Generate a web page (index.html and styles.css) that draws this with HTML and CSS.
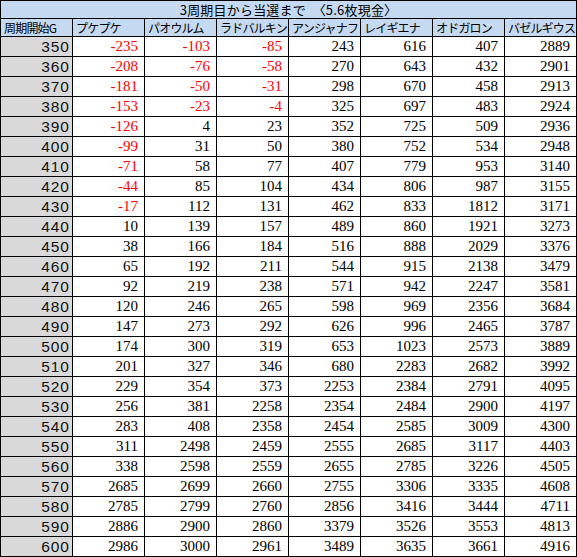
FILE: index.html
```html
<!DOCTYPE html>
<html lang="ja">
<head>
<meta charset="utf-8">
<title>3周期目から当選まで</title>
<link rel="stylesheet" href="styles.css">
</head>
<body>
<div class="sheet">
  <div class="title">3周期目から当選まで　〈5.6枚現金〉</div>
  <div class="hd">周期開始G</div><div class="hd">プケプケ</div><div class="hd">パオウルム</div><div class="hd">ラドバルキン</div><div class="hd">アンジャナフ</div><div class="hd">レイギエナ</div><div class="hd">オドガロン</div><div class="hd">バゼルギウス</div>
  <div class="g">350</div><div class="n neg">-235</div><div class="n neg">-103</div><div class="n neg">-85</div><div class="n">243</div><div class="n">616</div><div class="n">407</div><div class="n">2889</div>
  <div class="g">360</div><div class="n neg">-208</div><div class="n neg">-76</div><div class="n neg">-58</div><div class="n">270</div><div class="n">643</div><div class="n">432</div><div class="n">2901</div>
  <div class="g">370</div><div class="n neg">-181</div><div class="n neg">-50</div><div class="n neg">-31</div><div class="n">298</div><div class="n">670</div><div class="n">458</div><div class="n">2913</div>
  <div class="g">380</div><div class="n neg">-153</div><div class="n neg">-23</div><div class="n neg">-4</div><div class="n">325</div><div class="n">697</div><div class="n">483</div><div class="n">2924</div>
  <div class="g">390</div><div class="n neg">-126</div><div class="n">4</div><div class="n">23</div><div class="n">352</div><div class="n">725</div><div class="n">509</div><div class="n">2936</div>
  <div class="g">400</div><div class="n neg">-99</div><div class="n">31</div><div class="n">50</div><div class="n">380</div><div class="n">752</div><div class="n">534</div><div class="n">2948</div>
  <div class="g">410</div><div class="n neg">-71</div><div class="n">58</div><div class="n">77</div><div class="n">407</div><div class="n">779</div><div class="n">953</div><div class="n">3140</div>
  <div class="g">420</div><div class="n neg">-44</div><div class="n">85</div><div class="n">104</div><div class="n">434</div><div class="n">806</div><div class="n">987</div><div class="n">3155</div>
  <div class="g">430</div><div class="n neg">-17</div><div class="n">112</div><div class="n">131</div><div class="n">462</div><div class="n">833</div><div class="n">1812</div><div class="n">3171</div>
  <div class="g">440</div><div class="n">10</div><div class="n">139</div><div class="n">157</div><div class="n">489</div><div class="n">860</div><div class="n">1921</div><div class="n">3273</div>
  <div class="g">450</div><div class="n">38</div><div class="n">166</div><div class="n">184</div><div class="n">516</div><div class="n">888</div><div class="n">2029</div><div class="n">3376</div>
  <div class="g">460</div><div class="n">65</div><div class="n">192</div><div class="n">211</div><div class="n">544</div><div class="n">915</div><div class="n">2138</div><div class="n">3479</div>
  <div class="g">470</div><div class="n">92</div><div class="n">219</div><div class="n">238</div><div class="n">571</div><div class="n">942</div><div class="n">2247</div><div class="n">3581</div>
  <div class="g">480</div><div class="n">120</div><div class="n">246</div><div class="n">265</div><div class="n">598</div><div class="n">969</div><div class="n">2356</div><div class="n">3684</div>
  <div class="g">490</div><div class="n">147</div><div class="n">273</div><div class="n">292</div><div class="n">626</div><div class="n">996</div><div class="n">2465</div><div class="n">3787</div>
  <div class="g">500</div><div class="n">174</div><div class="n">300</div><div class="n">319</div><div class="n">653</div><div class="n">1023</div><div class="n">2573</div><div class="n">3889</div>
  <div class="g">510</div><div class="n">201</div><div class="n">327</div><div class="n">346</div><div class="n">680</div><div class="n">2283</div><div class="n">2682</div><div class="n">3992</div>
  <div class="g">520</div><div class="n">229</div><div class="n">354</div><div class="n">373</div><div class="n">2253</div><div class="n">2384</div><div class="n">2791</div><div class="n">4095</div>
  <div class="g">530</div><div class="n">256</div><div class="n">381</div><div class="n">2258</div><div class="n">2354</div><div class="n">2484</div><div class="n">2900</div><div class="n">4197</div>
  <div class="g">540</div><div class="n">283</div><div class="n">408</div><div class="n">2358</div><div class="n">2454</div><div class="n">2585</div><div class="n">3009</div><div class="n">4300</div>
  <div class="g">550</div><div class="n">311</div><div class="n">2498</div><div class="n">2459</div><div class="n">2555</div><div class="n">2685</div><div class="n">3117</div><div class="n">4403</div>
  <div class="g">560</div><div class="n">338</div><div class="n">2598</div><div class="n">2559</div><div class="n">2655</div><div class="n">2785</div><div class="n">3226</div><div class="n">4505</div>
  <div class="g">570</div><div class="n">2685</div><div class="n">2699</div><div class="n">2660</div><div class="n">2755</div><div class="n">3306</div><div class="n">3335</div><div class="n">4608</div>
  <div class="g">580</div><div class="n">2785</div><div class="n">2799</div><div class="n">2760</div><div class="n">2856</div><div class="n">3416</div><div class="n">3444</div><div class="n">4711</div>
  <div class="g">590</div><div class="n">2886</div><div class="n">2900</div><div class="n">2860</div><div class="n">3379</div><div class="n">3526</div><div class="n">3553</div><div class="n">4813</div>
  <div class="g">600</div><div class="n">2986</div><div class="n">3000</div><div class="n">2961</div><div class="n">3489</div><div class="n">3635</div><div class="n">3661</div><div class="n">4916</div>
</div>
</body>
</html>
```
FILE: styles.css
```css
html, body {
  margin: 0;
  padding: 0;
  background: #ffffff;
}
.sheet {
  display: grid;
  grid-template-columns: repeat(8, 71px);
  grid-template-rows: 17px 17px repeat(26, 19px);
  gap: 1px;
  padding: 1px;
  width: 577px;
  box-sizing: border-box;
  background: #000000;
}
.sheet > div {
  display: flex;
  align-items: center;
  white-space: nowrap;
  box-sizing: border-box;
}
.title {
  grid-column: 1 / -1;
  justify-content: center;
  background: #c5d9f1;
  font-family: "Noto Sans CJK JP", "Noto Sans", sans-serif;
  font-size: 13px;
  line-height: 17px;
  letter-spacing: 0.2px;
  color: #000;
}
.hd {
  background: #c5d9f1;
  font-family: "Noto Sans CJK JP", "Noto Sans", sans-serif;
  font-size: 12px;
  line-height: 17px;
  padding-left: 3px;
  letter-spacing: -0.8px;
  color: #000;
  overflow: hidden;
}
.g {
  background: #d9d9d9;
  justify-content: flex-end;
  align-items: flex-end !important;
  font-family: "Liberation Sans", Arial, sans-serif;
  font-size: 15.5px;
  line-height: 17px;
  letter-spacing: 1px;
  padding-right: 2px;
  padding-bottom: 1px;
  color: #111;
}
.n {
  background: #ffffff;
  justify-content: flex-end;
  align-items: flex-end !important;
  font-family: "Liberation Serif", "Times New Roman", serif;
  font-size: 15px;
  line-height: 17px;
  padding-right: 6px;
  padding-bottom: 1px;
  color: #000;
}
.neg {
  color: #ff0000;
}
```
